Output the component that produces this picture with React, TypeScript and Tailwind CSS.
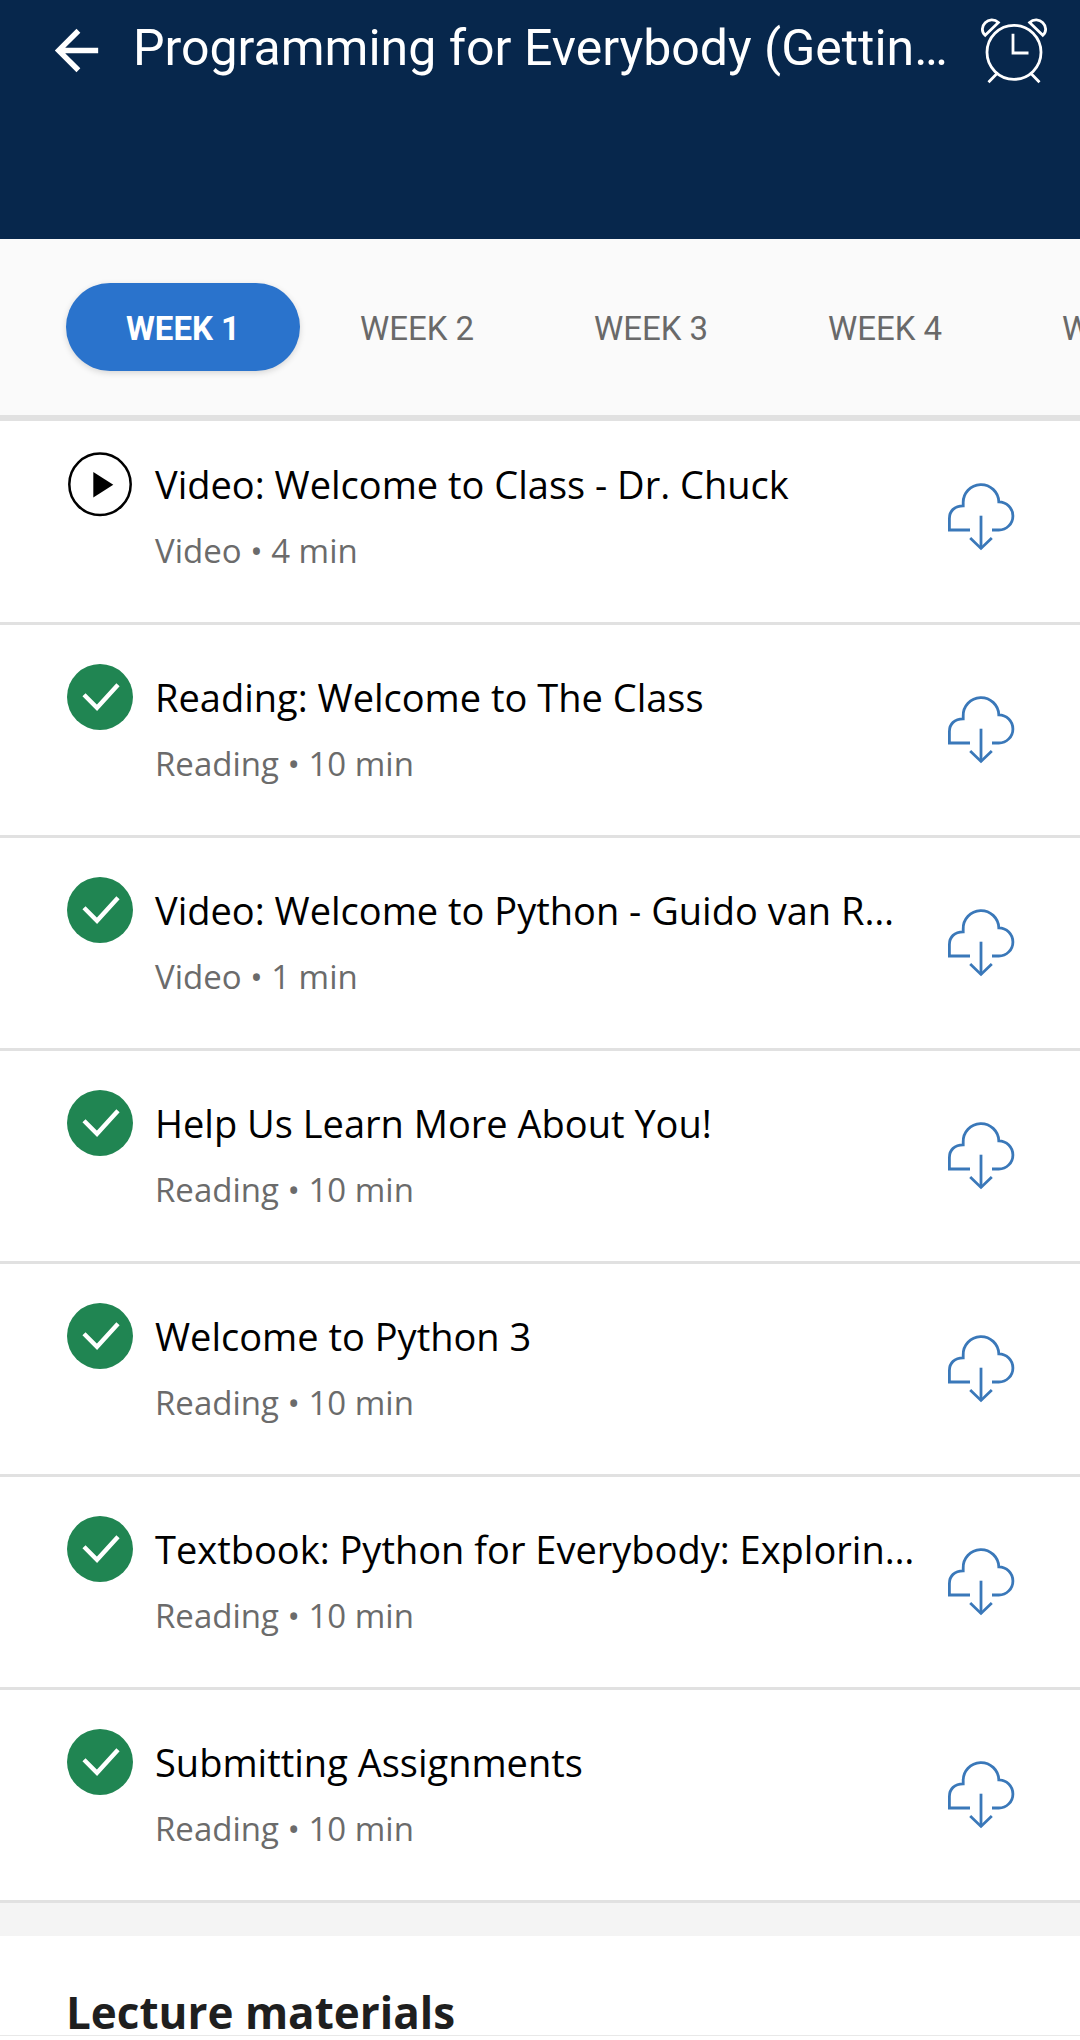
type Item = { title: string; kind: string; minutes: number; done: boolean };

const ITEMS: Item[] = [
  { title: "Video: Welcome to Class - Dr. Chuck", kind: "Video", minutes: 4, done: false },
  { title: "Reading: Welcome to The Class", kind: "Reading", minutes: 10, done: true },
  { title: "Video: Welcome to Python - Guido van R…", kind: "Video", minutes: 1, done: true },
  { title: "Help Us Learn More About You!", kind: "Reading", minutes: 10, done: true },
  { title: "Welcome to Python 3", kind: "Reading", minutes: 10, done: true },
  { title: "Textbook: Python for Everybody: Explorin…", kind: "Reading", minutes: 10, done: true },
  { title: "Submitting Assignments", kind: "Reading", minutes: 10, done: true },
];

const WEEKS = ["WEEK 1", "WEEK 2", "WEEK 3", "WEEK 4", "WEEK 5"];

function BackArrow() {
  return (
    <svg className="mt-[18px] ml-[44px] size-[65px] shrink-0 fill-white" viewBox="0 0 24 24">
      <path d="M20 11H7.83l5.59-5.59L12 4l-8 8 8 8 1.41-1.41L7.83 13H20v-2z" />
    </svg>
  );
}

function AlarmClock() {
  return (
    <svg
      className="mt-[15px] mr-[31px] ml-auto size-[70px] shrink-0"
      viewBox="0 0 70 70"
      fill="none"
      stroke="#fff"
      strokeWidth="2.8"
    >
      <circle cx="35" cy="37.3" r="27" />
      <path d="M34 18.8V38H49.5" />
      <path d="M18 58.5L9.5 67.2M52 58.5L60.5 67.2" />
      <path d="M6.2 20.3L19.4 7.6C15.2 3.6 9.5 4.4 6.2 7.7C2.6 11.3 2.2 16.6 6.2 20.3Z" />
      <path d="M63.8 20.3L50.6 7.6C54.8 3.6 60.5 4.4 63.8 7.7C67.4 11.3 67.8 16.6 63.8 20.3Z" />
    </svg>
  );
}

function PlayIcon() {
  return (
    <svg className="size-[66px] shrink-0" viewBox="0 0 66 66">
      <circle cx="33" cy="33.3" r="30.7" fill="none" stroke="#000" strokeWidth="2.5" />
      <path d="M26.3 21v25.5L46.3 33.8z" />
    </svg>
  );
}

function CheckIcon() {
  return (
    <svg className="size-[66px] shrink-0" viewBox="0 0 66 66">
      <circle cx="33" cy="33" r="33" fill="#208552" />
      <path d="M17 30.8L30 43.7L51 20.7" fill="none" stroke="#fff" strokeWidth="4.4" />
    </svg>
  );
}

function CloudDownload() {
  return (
    <svg
      className="size-[70px] shrink-0"
      viewBox="0 0 70 70"
      fill="none"
      stroke="#3a78b9"
      strokeWidth="2.8"
    >
      <path d="M24 49H3.4V37.5C3.4 30 8.5 24.9 17.2 24.9V22A17.8 17.8 0 0 1 52.8 20.8A14.1 14.1 0 0 1 52.8 49H46" />
      <path d="M35 34.7V67.4" />
      <path d="M24.2 57L35 67.4L45.8 57" />
    </svg>
  );
}

function Row({ item, first }: { item: Item; first: boolean }) {
  return (
    <li
      className={
        first
          ? "flex h-[204px] items-start border-b-[3px] border-[#e1e1e1] pt-[30px] pl-[67px]"
          : "flex h-[213px] items-start border-b-[3px] border-[#e1e1e1] pt-[39px] pl-[67px]"
      }
    >
      {item.done ? <CheckIcon /> : <PlayIcon />}
      <div className="mt-[7px] ml-[22px] w-[791px] font-['Open_Sans','Noto_Sans',sans-serif] whitespace-nowrap">
        <p className="text-[38px] leading-[52px] text-black">{item.title}</p>
        <p className="mt-[18px] text-[33px] leading-[46px] text-[#6b6b6b]">
          {item.kind} • {item.minutes} min
        </p>
      </div>
      <div className="mt-[30px]">
        <CloudDownload />
      </div>
    </li>
  );
}

export default function App() {
  return (
    <div className="h-[2040px] w-[1080px] overflow-hidden bg-white">
      <header className="flex h-[239px] items-start bg-[#07274c]">
        <BackArrow />
        <h1 className="mt-[18px] ml-[24px] font-[Roboto,sans-serif] text-[50px] leading-[60px] font-normal whitespace-nowrap text-white">
          Programming for Everybody (Gettin…
        </h1>
        <AlarmClock />
      </header>

      <nav className="flex h-[182px] overflow-hidden border-b-[6px] border-[#e1e1e1] bg-[#fafafa] pt-11 pl-[66px] font-[Roboto,sans-serif] text-[33px]">
        {WEEKS.map((week, i) => (
          <button
            key={week}
            className={
              i === 0
                ? "flex h-[88px] w-[234px] shrink-0 items-center justify-center rounded-full bg-[#2a73cc] pt-1 font-bold text-white shadow-[0_2px_6px_rgba(0,0,0,0.15)]"
                : "flex h-[88px] w-[234px] shrink-0 items-center justify-center pt-1 text-[#696969]"
            }
          >
            {week}
          </button>
        ))}
      </nav>

      <ul>
        {ITEMS.map((item, i) => (
          <Row key={item.title} item={item} first={i === 0} />
        ))}
      </ul>

      <div className="h-[33px] bg-[#f4f4f4]" />

      <section className="h-[104px] pt-[46px]">
        <h2 className="h-[54px] border-b border-[#e8e8e8] pl-[66px] font-['Open_Sans','Noto_Sans',sans-serif] text-[44px] leading-[60px] font-bold text-[#1f1f1f]">
          Lecture materials
        </h2>
      </section>
    </div>
  );
}
